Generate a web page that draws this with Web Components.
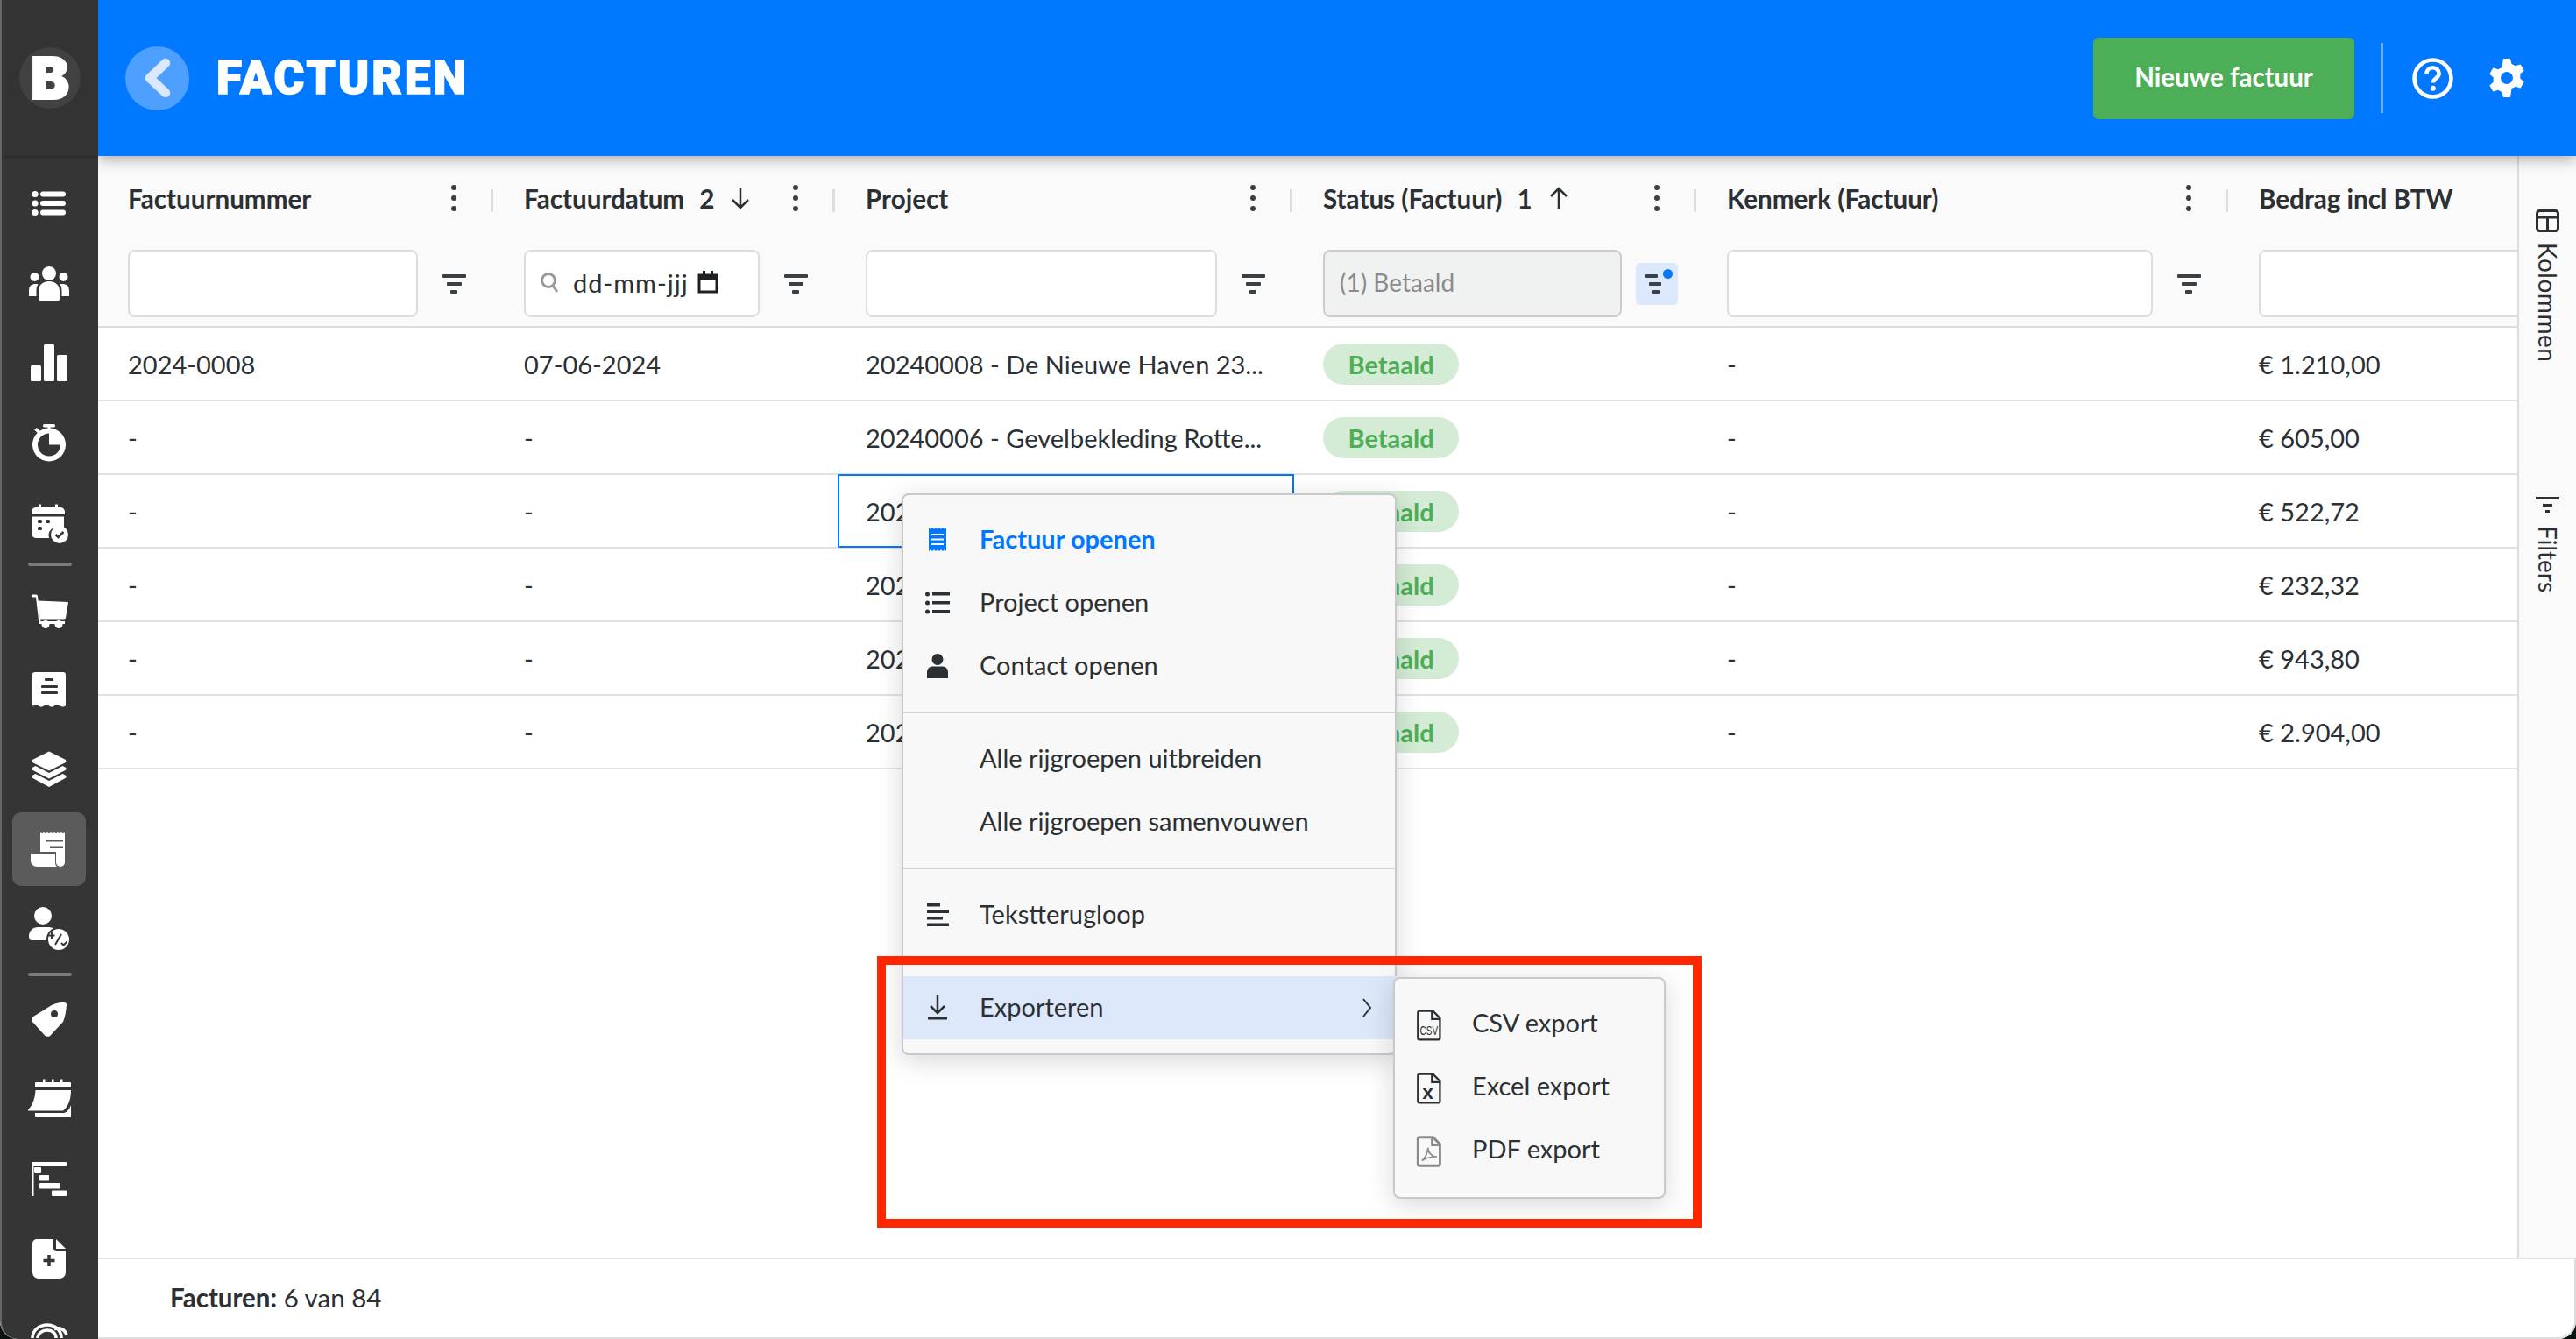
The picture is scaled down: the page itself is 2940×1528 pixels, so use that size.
<!DOCTYPE html>
<html lang="nl">
<head>
<meta charset="utf-8">
<title>Facturen</title>
<style>
  html, body { margin: 0; height: 100%; background: #0c1412; }
</style>
</head>
<body>

<fa-app>
  <fa-sidebar slot="sidebar">
    <fa-nav-item icon="list"></fa-nav-item>
    <fa-nav-item icon="people"></fa-nav-item>
    <fa-nav-item icon="bars"></fa-nav-item>
    <fa-nav-item icon="timer"></fa-nav-item>
    <fa-nav-item icon="calcheck"></fa-nav-item>
    <fa-nav-divider></fa-nav-divider>
    <fa-nav-item icon="cart"></fa-nav-item>
    <fa-nav-item icon="receipt"></fa-nav-item>
    <fa-nav-item icon="layers"></fa-nav-item>
    <fa-nav-item icon="invoice" active></fa-nav-item>
    <fa-nav-item icon="userbadge"></fa-nav-item>
    <fa-nav-divider style="margin-top:5px;margin-bottom:3px"></fa-nav-divider>
    <fa-nav-item icon="tag"></fa-nav-item>
    <fa-nav-item icon="calflip"></fa-nav-item>
    <fa-nav-item icon="gantt"></fa-nav-item>
    <fa-nav-item icon="fileplus"></fa-nav-item>
    <fa-nav-item icon="spiral"></fa-nav-item>
  </fa-sidebar>

  <fa-header slot="header" title-text="FACTUREN" action="Nieuwe factuur"></fa-header>

  <fa-table slot="table">
    <fa-col-head slot="head" label="Factuurnummer"></fa-col-head>
    <fa-col-head slot="head" label="Factuurdatum" sort="2" dir="down" type="date"></fa-col-head>
    <fa-col-head slot="head" label="Project"></fa-col-head>
    <fa-col-head slot="head" label="Status (Factuur)" sort="1" dir="up" value="(1) Betaald" filtered></fa-col-head>
    <fa-col-head slot="head" label="Kenmerk (Factuur)"></fa-col-head>
    <fa-col-head slot="head" label="Bedrag incl BTW" last></fa-col-head>

    <fa-row><span>2024-0008</span><span>07-06-2024</span><span>20240008 - De Nieuwe Haven 23...</span><span><fa-badge>Betaald</fa-badge></span><span>-</span><span>€ 1.210,00</span></fa-row>
    <fa-row><span>-</span><span>-</span><span>20240006 - Gevelbekleding Rotte...</span><span><fa-badge>Betaald</fa-badge></span><span>-</span><span>€ 605,00</span></fa-row>
    <fa-row><span>-</span><span>-</span><span class="focus">202</span><span><fa-badge>Betaald</fa-badge></span><span>-</span><span>€ 522,72</span></fa-row>
    <fa-row><span>-</span><span>-</span><span>202</span><span><fa-badge>Betaald</fa-badge></span><span>-</span><span>€ 232,32</span></fa-row>
    <fa-row><span>-</span><span>-</span><span>202</span><span><fa-badge>Betaald</fa-badge></span><span>-</span><span>€ 943,80</span></fa-row>
    <fa-row><span>-</span><span>-</span><span>202</span><span><fa-badge>Betaald</fa-badge></span><span>-</span><span>€ 2.904,00</span></fa-row>
  </fa-table>

  <fa-side-panel slot="panel"></fa-side-panel>

  <fa-footer slot="footer"><b>Facturen:</b>&nbsp;6 van 84</fa-footer>

  <fa-menu slot="overlay" style="left:1029px;top:563px;width:565px;height:641px">
    <fa-menu-item icon="m-receipt" accent>Factuur openen</fa-menu-item>
    <fa-menu-item icon="m-list">Project openen</fa-menu-item>
    <fa-menu-item icon="m-person">Contact openen</fa-menu-item>
    <fa-menu-sep></fa-menu-sep>
    <fa-menu-item>Alle rijgroepen uitbreiden</fa-menu-item>
    <fa-menu-item>Alle rijgroepen samenvouwen</fa-menu-item>
    <fa-menu-sep></fa-menu-sep>
    <fa-menu-item icon="m-wrap">Tekstterugloop</fa-menu-item>
    <fa-menu-sep></fa-menu-sep>
    <fa-menu-item icon="m-download" highlighted arrow>Exporteren</fa-menu-item>
  </fa-menu>

  <fa-menu slot="overlay" style="left:1590px;top:1115px;width:311px;height:253px">
    <fa-menu-item sub icon="m-csv">CSV export</fa-menu-item>
    <fa-menu-item sub icon="m-xls">Excel export</fa-menu-item>
    <fa-menu-item sub icon="m-pdf">PDF export</fa-menu-item>
  </fa-menu>

  <fa-callout slot="overlay" style="left:1001px;top:1091px;width:941px;height:310px"></fa-callout>
</fa-app>

<script>
// icons are drawn in a 48x48 box (menu ones in 28x28)
const D = "#353535";
const ICONS = {
  list: `<circle cx="8" cy="13.5" r="3.6"/><circle cx="8" cy="24" r="3.6"/><circle cx="8" cy="34.5" r="3.6"/>
    <rect x="14" y="10.5" width="29" height="6" rx="3"/><rect x="14" y="21" width="29" height="6" rx="3"/><rect x="14" y="31.5" width="29" height="6" rx="3"/>`,
  people: `<circle cx="24" cy="13" r="8"/><circle cx="7.5" cy="17" r="5"/><circle cx="40.5" cy="17" r="5"/>
    <path d="M12 43V33c0-7 5-11 12-11s12 4 12 11v10a2 2 0 0 1-2 1H14a2 2 0 0 1-2-1z"/>
    <path d="M1 39v-6c0-6 3-8 8-8 1 0 2 0 2.500.5C10 27 9.500 30 9.500 33v6z"/><path d="M47 39v-6c0-6-3-8-8-8-1 0-2 0-2.500.5C38 27 38.500 30 38.500 33v6z"/>`,
  bars: `<rect x="3" y="27" width="12" height="18" rx="1.500"/><rect x="18" y="3" width="12" height="42" rx="1.500"/><rect x="33" y="15" width="12" height="30" rx="1.500"/>`,
  timer: `<rect x="17" y="3" width="14" height="3.500" rx="1.500"/><rect x="22.500" y="5" width="3" height="5"/><path d="M7 9.500l3-2.500 4 4-2.500 2.500z"/>
    <path fill-rule="evenodd" d="M24 7.500a19 19 0 1 1 0 38 19 19 0 0 1 0-38zm0 6a13 13 0 1 0 13 13H24z"/>`,
  calcheck: `<path d="M9 7h3V3.500h3V7h16V3.500h3V7h3a5 5 0 0 1 5 5v3H4v-3a5 5 0 0 1 5-5z"/>
    <path d="M4 17.500h37V30H30a9 9 0 0 0-6 12H9a5 5 0 0 1-5-5z"/>
    <rect x="11" y="21" width="5" height="4" rx="1.500" fill="${D}"/><rect x="20" y="21" width="5" height="4" rx="1.500" fill="${D}"/><rect x="11" y="29" width="5" height="4" rx="1.500" fill="${D}"/>
    <circle cx="36" cy="38" r="10"/><path d="M31.500 38l3 3 6-6" fill="none" stroke="${D}" stroke-width="2.500"/>`,
  cart: `<path d="M4 6.500h5a2 2 0 0 1 2 1.700L14.500 37H42v3H12.500L9 9.500H4z"/><path d="M11 13.500l35 1.500-3 18a2 2 0 0 1-2 1.500H14z"/>
    <circle cx="20" cy="40.500" r="4.500"/><circle cx="35" cy="40.500" r="4.500"/>`,
  receipt: `<path d="M8 4h32a3 3 0 0 1 3 3v35c-2 2-4 2-6.500.5-2.500-1.500-4.500-1.500-6.500 0-2 1.500-4 1.500-6 0s-4-1.500-6 0-4 1.500-6 0-4-1.500-6.500 0C9 44 7 44 5 42V7a3 3 0 0 1 3-3z"/>
    <rect x="19" y="11" width="10" height="3" rx="1" fill="${D}"/><rect x="15" y="19" width="19" height="3" rx="1" fill="${D}"/><rect x="15" y="26" width="19" height="3" rx="1" fill="${D}"/>`,
  layers: `<path d="M24 3.500l18 9c2 1 2 3 0 4l-18 9-18-9c-2-1-2-3 0-4z"/>
    <path d="M8.500 20l15.500 8 15.500-8 3 1.500c1.500 1 1.500 2.500 0 3.500L24 34.500 5.500 25c-1.500-1-1.500-2.500 0-3.500z"/>
    <path d="M8.500 29l15.500 8 15.500-8 3 1.500c1.500 1 1.500 2.500 0 3.500L24 44 5.500 34c-1.500-1-1.500-2.500 0-3.500z"/>`,
  invoice: `<path d="M14 5l2 1.300 2-1.300 2 1.300 2-1.300 2 1.300 2-1.300 2 1.300 2-1.300 2 1.300 2-1.300 2 1.300 2-1.300 2 1.300 2-1.300h0v34a5 5 0 0 1-10 0v-12H14z" fill="#fff"/>
    <path d="M3 29h28v10c0 2 .6 4 2 5H10a7 7 0 0 1-7-7z"/>
    <rect x="20" y="13" width="20" height="2.500" fill="#5a5a5a"/><rect x="25" y="20.500" width="15" height="2.500" fill="#5a5a5a"/>`,
  userbadge: `<circle cx="17" cy="9" r="10"/><path d="M1 32c0-6 5-10 10-10h12c5 0 8 2 9 6l-6 9H4c-2 0-3-2-3-5z"/>
    <circle cx="35" cy="36" r="13" stroke="${D}" stroke-width="2"/>
    <path d="M27 28v7M23.500 31.500h7M31 42l7-12M38 40l2.500 2.500 4-4" fill="none" stroke="${D}" stroke-width="2"/>`,
  tag: `<path fill-rule="evenodd" d="M6 21L27 8c5-2.500 10-3 14.500-3 1.500 0 2.500 1 2.500 2.500-.5 6-1.500 14-4 19.500L27 41c-2 3-5 3.500-7.500 2L6 28c-2.500-2-2.500-5 0-7zm24-7a4 4 0 1 0 0 8 4 4 0 0 0 0-8z"/>`,
  calflip: `<rect x="17" y="1.500" width="2.500" height="5"/><rect x="27" y="1.500" width="2.500" height="5"/><rect x="37" y="1.500" width="2.500" height="5"/>
    <rect x="8" y="5" width="41" height="6" rx="1"/><path d="M8.500 14H49c0 10-3 19-9 23.500H1c-1 0-1.500-.5-1-1 5-5 8-13 8.500-22.500z"/>
    <path d="M8 40h33c4-1 6-4 8-9v14H9a1 1 0 0 1-1-1z"/>`,
  gantt: `<rect x="4" y="5" width="2.500" height="39"/><rect x="4" y="5" width="40" height="5" rx="1"/><rect x="7" y="11" width="8" height="6" rx="1"/>
    <rect x="13" y="20" width="11" height="6.500" rx="1"/><rect x="13" y="29" width="24" height="6.500" rx="1"/><rect x="27" y="37.500" width="17" height="6.500" rx="1"/>`,
  fileplus: `<path d="M10 2h19v10a4 4 0 0 0 4 4h10v24a7 7 0 0 1-7 7H12a7 7 0 0 1-7-7V7a5 5 0 0 1 5-5z"/><path d="M32 2l11 11H32z"/>
    <path d="M24 20v13M17.500 26.500h13" stroke="${D}" stroke-width="3.500" fill="none"/>`,
  spiral: `<g fill="none" stroke="#fff" stroke-width="3.500"><path d="M5 24c0-9 8-15 17-15s16 6 16 15"/><path d="M11 24c0-5 5-9 11-9s10 4 10 9"/><path d="M30 14c6-3 12 0 14 6"/></g>`,

  "m-receipt": `<path d="M4 0l2 1.800L8 0l2 1.800L12 0l2 1.800L16 0l2 1.800L20 0l2 1.800L24 0v27l-2-1.800L20 27l-2-1.800L16 27l-2-1.800L12 27l-2-1.800L8 27l-2-1.800L4 27z"/>
    <g fill="#f8f8f8"><rect x="7" y="7" width="14" height="2"/><rect x="7" y="12.500" width="14" height="2"/><rect x="7" y="18" width="14" height="2"/></g>`,
  "m-list": `<circle cx="2.500" cy="4" r="2.500"/><circle cx="2.500" cy="14" r="2.500"/><circle cx="2.500" cy="24" r="2.500"/><rect x="8" y="2" width="20" height="3.500"/><rect x="8" y="12" width="20" height="3.500"/><rect x="8" y="22" width="20" height="3.500"/>`,
  "m-person": `<circle cx="14" cy="6.500" r="6.500"/><path d="M2 28v-7c0-4 3-6.500 6-6.500h12c3 0 6 2.500 6 6.500v7z" /><rect x="2" y="25" width="24" height="3" rx="1.500"/>`,
  "m-wrap": `<rect x="2" y="1" width="15" height="3.500"/><rect x="2" y="8.500" width="25" height="3.500"/><rect x="2" y="16" width="18" height="3.500"/><rect x="2" y="23.500" width="25" height="3.500"/>`,
  "m-download": `<path d="M14 0v19M6 12l8 8 8-8" fill="none" stroke="currentColor" stroke-width="2.500"/><rect x="3" y="24" width="22" height="3.500"/>`,
  "m-csv": `<path d="M3 1.500h14l7 7v20a1.500 1.500 0 0 1-1.500 1.500h-19A1.500 1.500 0 0 1 2 28.500V3a1.500 1.500 0 0 1 1-1.500z" fill="none" stroke="currentColor" stroke-width="2"/><path d="M16 1.500v8h8" fill="none" stroke="currentColor" stroke-width="2"/><text x="13" y="25" font-size="12.500" font-family="Liberation Sans" text-anchor="middle" textLength="18" lengthAdjust="spacingAndGlyphs">CSV</text>`,
  "m-xls": `<path d="M3 1.500h14l7 7v20a1.500 1.500 0 0 1-1.500 1.500h-19A1.500 1.500 0 0 1 2 28.500V3a1.500 1.500 0 0 1 1-1.500z" fill="none" stroke="currentColor" stroke-width="2"/><path d="M16 1.500v8h8" fill="none" stroke="currentColor" stroke-width="2"/><text x="12" y="26.500" font-size="20" font-weight="700" font-family="Liberation Sans" text-anchor="middle">x</text>`,
  "m-pdf": `<g fill="none" stroke="#8a8a8a"><path d="M3 1.500h14l7 7v20a1.500 1.500 0 0 1-1.500 1.500h-19A1.500 1.500 0 0 1 2 28.500V3a1.500 1.500 0 0 1 1-1.500z" stroke-width="2.500"/><path d="M16 1.500v8h8" stroke-width="2"/><path d="M6 25c3-2 6-8 6-13 0 5 4 9 9 9-6 0-11 1-15 4z" stroke-width="1.500"/></g>`,
};

class FaIcon extends HTMLElement {
  connectedCallback() {
    const size = this.getAttribute("size") || 48;
    const box = this.getAttribute("box") || 48;
    const root = this.shadowRoot || this.attachShadow({ mode: "open" });
    root.innerHTML = `<style>:host{display:inline-flex;line-height:0}svg{overflow:visible;fill:currentColor}</style>
      <svg width="${size}" height="${size}" viewBox="0 0 ${box} ${box}">${ICONS[this.getAttribute("name")] || ""}</svg>`;
  }
}

const appTemplate = document.createElement("template");
appTemplate.innerHTML = `
<style>
  :host {
    display: grid;
    grid-template-columns: 112px 1fr 67px;
    grid-template-rows: 178px 1fr 93px;
    width: 2940px;
    height: 1528px;
    position: relative;
    overflow: hidden;
    border-radius: 0 0 20px 20px;
    background: #fff;
    font-family: Lato, "Noto Sans", sans-serif;
    color: #2b3034;
    font-size: 29px;
  }
  .sidebar { grid-row: 1 / 4; grid-column: 1; display: flex; min-height: 0; }
  .header { grid-row: 1; grid-column: 2 / 4; display: flex; position: relative; z-index: 2; }
  .table { grid-row: 2; grid-column: 2; display: flex; min-width: 0; min-height: 0; }
  .panel { grid-row: 2; grid-column: 3; display: flex; min-height: 0; }
  .footer { grid-row: 3; grid-column: 2 / 4; display: flex; }
</style>
<div class="sidebar"><slot name="sidebar"></slot></div>
<div class="header"><slot name="header"></slot></div>
<div class="table"><slot name="table"></slot></div>
<div class="panel"><slot name="panel"></slot></div>
<div class="footer"><slot name="footer"></slot></div>
<slot name="overlay"></slot>
`;
class FaApp extends HTMLElement {
  constructor() {
    super();
    this.attachShadow({ mode: "open" });
    this.shadowRoot.appendChild(appTemplate.content.cloneNode(true));
  }
}

class FaSidebar extends HTMLElement {
  constructor() {
    super();
    this.attachShadow({ mode: "open" }).innerHTML = `
<style>
  :host { display: flex; flex-direction: column; flex: 1; background: #353535; border-left: 2px solid #666; border-radius: 0 0 0 20px; overflow: hidden; position: relative; z-index: 3; }
  .logo { height: 178px; flex: none; background: #333; box-shadow: 0 1px 3px rgba(0,0,0,.3); display: flex; align-items: center; justify-content: center; margin-bottom: 8px; }
  .logo span { width: 70px; height: 70px; border-radius: 50%; background: #414141; display: flex; align-items: center; justify-content: center;
    color: #fff; font: 900 66px/1 Inter, Roboto, sans-serif; -webkit-text-stroke: 2px #fff; }
</style>
<div class="logo"><span>B</span></div>
<slot></slot>`;
  }
}

class FaNavItem extends HTMLElement {
  constructor() {
    super();
    this.attachShadow({ mode: "open" }).innerHTML = `
<style>
  :host { display: flex; flex: none; height: 91px; align-items: center; justify-content: center; margin-left: -2px; color: #fff; }
  :host([active]) .box { background: #5b5b5b; }
  .box { width: 84px; height: 84px; border-radius: 10px; display: flex; align-items: center; justify-content: center; }
</style>
<div class="box"><fa-icon name="${this.getAttribute("icon")}"></fa-icon></div>`;
  }
}

class FaNavDivider extends HTMLElement {
  constructor() {
    super();
    this.attachShadow({ mode: "open" }).innerHTML = `
<style>
  :host { display: block; flex: none; height: 4px; margin: 1px 30px 4px 30px; background: #7b7b7b; border-radius: 2px; }
</style>`;
  }
}

class FaHeader extends HTMLElement {
  constructor() {
    super();
    this.attachShadow({ mode: "open" }).innerHTML = `
<style>
  :host { display: flex; flex: 1; align-items: center; background: #0078ff; box-shadow: 0 3px 16px rgba(0,0,0,.35); padding: 0 56px 0 31px; color: #fff; }
  .back { width: 73px; height: 73px; border-radius: 50%; background: rgba(255,255,255,.3); display: flex; align-items: center; justify-content: center; flex: none; }
  h1 { margin: 0 0 0 31px; font: 900 53px/1 Roboto, sans-serif; letter-spacing: 3px; -webkit-text-stroke: 1.500px #fff; flex: 1; }
  .action { width: 298px; height: 93px; border: 0; background: #4caf57; color: #fff; border-radius: 6px; font: 700 29.5px Lato, sans-serif; padding: 0 0 3px; }
  .rule { width: 3px; height: 80px; margin: 0 33px 0 30px; background: rgba(255,255,255,.4); }
  .tools { display: flex; gap: 38px; align-items: center; }
  svg { display: block; }
</style>
<div class="back"><svg width="40" height="52" viewBox="0 0 40 52"><path d="M29 9L11 26l18 17" fill="none" stroke="#dbe8ff" stroke-width="10.500" stroke-linejoin="round" stroke-linecap="round"/></svg></div>
<h1>${this.getAttribute("title-text")}</h1>
<button class="action">${this.getAttribute("action")}</button>
<div class="rule"></div>
<div class="tools">
  <svg width="47" height="47" viewBox="0 0 46 46"><circle cx="23" cy="23" r="20.500" fill="none" stroke="#fff" stroke-width="4.500"/>
    <path d="M16 18c0-4 3-7 7-7s7 3 7 6.500c0 5-6.500 5-6.500 10.500" fill="none" stroke="#fff" stroke-width="4.500"/><circle cx="23.300" cy="34" r="3" fill="#fff"/></svg>
  <svg width="46" height="46" viewBox="0 0 46 46"><path fill="#fff" fill-rule="evenodd" d="M19 1h8l1.500 6c1.500.5 3 1.200 4.200 2.200l6-1.800 4 7-4.500 4.200c.3 1.600.3 3.200 0 4.800l4.500 4.200-4 7-6-1.800c-1.200 1-2.700 1.700-4.200 2.200L27 45h-8l-1.500-6c-1.500-.5-3-1.200-4.200-2.200l-6 1.800-4-7 4.500-4.200c-.3-1.600-.3-3.200 0-4.800L3.300 18.400l4-7 6 1.800c1.200-1 2.700-1.700 4.200-2.200zM23 16a7 7 0 1 0 0 14 7 7 0 0 0 0-14z"/></svg>
</div>`;
  }
}

class FaTable extends HTMLElement {
  constructor() {
    super();
    this.attachShadow({ mode: "open" }).innerHTML = `
<style>
  :host { display: block; flex: 1; min-width: 0; overflow: hidden; background: #fff; --cols: 451px 390px 522px 461px 607px 331px; }
  .head { display: grid; grid-template-columns: var(--cols); height: 194px; background: #fafafa; border-bottom: 2px solid #ddd; }
</style>
<div class="head"><slot name="head"></slot></div>
<slot></slot>`;
  }
}

class FaColHead extends HTMLElement {
  constructor() {
    super();
    const a = (n) => this.getAttribute(n);
    const sort = a("sort")
      ? `<span class="num">${a("sort")}</span><svg class="arrow" width="22" height="26" viewBox="0 0 22 26"><path d="${a("dir") === "down" ? "M11 1v23M2 15l9 9 9-9" : "M11 25V2M2 11l9-9 9 9"}" fill="none" stroke="#2b3034" stroke-width="2.500"/></svg>`
      : "";
    const input = a("type") === "date"
      ? `<svg width="22" height="24" viewBox="0 0 22 24"><circle cx="10" cy="10" r="7.500" fill="none" stroke="#999" stroke-width="3"/><path d="M15 16l5 7" stroke="#999" stroke-width="3"/></svg>
         <span class="date">dd-mm-jjj</span>
         <svg class="cal" width="24" height="26" viewBox="0 0 24 26"><path d="M2 5h20v19H2z" fill="none" stroke="#1d2124" stroke-width="3"/><path d="M1 4h22v6H1zM6 0h3v5H6zM15 0h3v5h-3z" fill="#1d2124"/></svg>`
      : (a("value") || "");
    this.attachShadow({ mode: "open" }).innerHTML = `
<style>
  :host { display: flex; flex-direction: column; min-width: 0; padding: 23px 25px 0 35px; position: relative; overflow: hidden; }
  :host(:first-child) { padding-left: 34px; }
  .title { height: 50px; display: flex; align-items: center; font-weight: 700; font-size: 29.6px; white-space: nowrap; }
  .num { margin-left: 17px; }
  .arrow { margin-left: 19px; }
  .kebab { margin-left: auto; width: 40px; display: flex; flex-direction: column; align-items: center; gap: 6px; }
  .kebab i { width: 6px; height: 6px; border-radius: 50%; background: #3b4044; }
  :host::after { content: ""; position: absolute; right: 0; top: 38px; height: 26px; width: 3px; background: #ddd; }
  :host([last])::after { display: none; }
  .filters { margin-top: 34px; display: flex; gap: 21px; align-items: center; }
  .input { flex: 1; min-width: 0; height: 77px; box-sizing: border-box; border: 2px solid #ddd; border-radius: 8px; background: #fff; display: flex; align-items: center; gap: 10px; padding: 0 16px 3px; color: #2b3034; white-space: nowrap; }
  :host([last]) .input { flex: none; width: 420px; }
  :host([filtered]) .input { background: #f0f2f1; border-color: #ccc; color: #8a8a8a; font-size: 28px; padding-left: 17px; }
  .date { margin-left: 6px; letter-spacing: 1px; }
  .funnel { flex: none; width: 40px; height: 48px; display: flex; flex-direction: column; align-items: center; justify-content: center; gap: 5px; position: relative; border-radius: 5px; }
  .funnel i { height: 4px; background: #3b4044; border-radius: 1px; }
  .funnel i:nth-child(1) { width: 27px; } .funnel i:nth-child(2) { width: 17px; } .funnel i:nth-child(3) { width: 8px; }
  :host([filtered]) .funnel { background: #dce8fc; width: 48px; margin: 0 -4px 0 -5px; }
  :host([filtered]) .funnel i:nth-child(1) { width: 14px; margin-left: -13px; }
  :host([filtered]) .funnel i:nth-child(2) { width: 14px; margin-left: -4px; }
  :host([filtered]) .funnel i:nth-child(3) { width: 8px; margin-left: -3px; }
  .dot { position: absolute; top: 7px; right: 6px; width: 11px; height: 11px; border-radius: 50%; background: #0078ff; }
</style>
<div class="title">${a("label")}${sort}${a("last") === null ? `<span class="kebab"><i></i><i></i><i></i></span>` : ""}</div>
<div class="filters">
  <div class="input">${input}</div>
  ${a("last") === null ? `<div class="funnel"><i></i><i></i><i></i>${a("filtered") !== null ? `<span class="dot"></span>` : ""}</div>` : ""}
</div>`;
  }
}

class FaRow extends HTMLElement {
  constructor() {
    super();
    this.attachShadow({ mode: "open" }).innerHTML = `
<style>
  :host { display: grid; grid-template-columns: var(--cols); height: 84px; box-sizing: border-box; border-bottom: 2px solid #e2e2e2; }
  ::slotted(span) { display: flex; align-items: center; padding-left: 35px; white-space: nowrap; min-width: 0; position: relative; }
  ::slotted(span:first-child) { padding-left: 34px; }
  ::slotted(.focus)::after { content: ""; position: absolute; left: 3px; right: -2px; top: -1px; bottom: -1px; border: 2px solid #0078ff; }
</style>
<slot></slot>`;
  }
}

class FaBadge extends HTMLElement {
  constructor() {
    super();
    this.attachShadow({ mode: "open" }).innerHTML = `
<style>
  :host { display: inline-flex; align-items: center; height: 47px; padding: 0 28.500px; border-radius: 24px; background: #d4ecd6; color: #4caf57; font-weight: 700; }
</style>
<slot></slot>`;
  }
}

class FaSidePanel extends HTMLElement {
  constructor() {
    super();
    this.attachShadow({ mode: "open" }).innerHTML = `
<style>
  :host { display: flex; flex-direction: column; flex: 1; align-items: center; background: #fafafa; border-left: 2px solid #ddd; padding: 61px 0 0 0; box-sizing: border-box; color: #2b3034; }
  .tab { display: flex; flex-direction: row; align-items: center; gap: 12px; writing-mode: vertical-rl; font-size: 28px; line-height: 30px; letter-spacing: .5px; }
  .tab + .tab { margin-top: 154px; gap: 14px; letter-spacing: 0; }
  svg { display: block; }
</style>
<div class="tab"><svg width="27" height="26" viewBox="0 0 27 26"><rect x="1.500" y="1.500" width="24" height="23" rx="3" fill="none" stroke="#2b3034" stroke-width="3"/><path d="M1 9h25M13.500 9v16" stroke="#2b3034" stroke-width="3"/></svg><span>Kolommen</span></div>
<div class="tab"><svg width="27" height="19" viewBox="0 0 27 19"><rect width="27" height="3" fill="#2b3034"/><rect x="8" y="8" width="11" height="3" fill="#2b3034"/><rect x="11" y="15" width="5" height="3" fill="#2b3034"/></svg><span>Filters</span></div>`;
  }
}

class FaFooter extends HTMLElement {
  constructor() {
    super();
    this.attachShadow({ mode: "open" }).innerHTML = `
<style>
  :host { display: flex; flex: 1; align-items: center; padding: 0 0 3px 82px; font-size: 29.5px; background: #fff; border-top: 2px solid #e2e2e2; border-bottom: 2px solid #ddd; border-right: 2px solid #ddd; border-radius: 0 0 20px 0; box-sizing: border-box; }
</style>
<slot></slot>`;
  }
}

class FaMenu extends HTMLElement {
  constructor() {
    super();
    this.attachShadow({ mode: "open" }).innerHTML = `
<style>
  :host { position: absolute; display: flex; flex-direction: column; box-sizing: border-box; padding: 15px 0; background: #f8f8f8; border: 2px solid #c9c9c9; border-radius: 8px; box-shadow: 0 6px 30px rgba(0,0,0,.16); z-index: 5; }
</style>
<slot></slot>`;
  }
}

class FaMenuItem extends HTMLElement {
  constructor() {
    super();
    const name = this.getAttribute("icon");
    const isSub = this.hasAttribute("sub");
    this.attachShadow({ mode: "open" }).innerHTML = `
<style>
  :host { display: flex; flex: none; align-items: center; height: 72px; padding-left: ${isSub ? 26 : 25}px; color: #2b3034; white-space: nowrap; }
  :host([accent]) { color: #0078ff; font-weight: 700; }
  :host([highlighted]) { background: #dce7f9; margin-right: -2px; }
  .icon { width: 28px; height: 32px; flex: none; display: flex; align-items: center; justify-content: center; margin-right: 34px; }
  .label { padding-bottom: 3px; }
  .arrow { margin-left: auto; margin-right: 28px; }
</style>
<span class="icon">${name ? `<fa-icon name="${name}" box="28" size="${isSub ? 32 : 28}"></fa-icon>` : ""}</span>
<span class="label"><slot></slot></span>
${this.hasAttribute("arrow") ? `<svg class="arrow" width="12" height="26" viewBox="0 0 12 26"><path d="M2 3l8 10-8 10" fill="none" stroke="#2b3034" stroke-width="2"/></svg>` : ""}`;
  }
}

class FaMenuSep extends HTMLElement {
  constructor() {
    super();
    this.attachShadow({ mode: "open" }).innerHTML = `
<style>
  :host { display: block; flex: none; height: 2px; margin: 16px 0; background: #d4d4d4; }
</style>`;
  }
}

class FaCallout extends HTMLElement {
  constructor() {
    super();
    this.attachShadow({ mode: "open" }).innerHTML = `
<style>
  :host { position: absolute; box-sizing: border-box; border: 10px solid #ff2600; z-index: 6; pointer-events: none; }
</style>`;
  }
}

customElements.define("fa-icon", FaIcon);
customElements.define("fa-app", FaApp);
customElements.define("fa-sidebar", FaSidebar);
customElements.define("fa-nav-item", FaNavItem);
customElements.define("fa-nav-divider", FaNavDivider);
customElements.define("fa-header", FaHeader);
customElements.define("fa-table", FaTable);
customElements.define("fa-col-head", FaColHead);
customElements.define("fa-row", FaRow);
customElements.define("fa-badge", FaBadge);
customElements.define("fa-side-panel", FaSidePanel);
customElements.define("fa-footer", FaFooter);
customElements.define("fa-menu", FaMenu);
customElements.define("fa-menu-item", FaMenuItem);
customElements.define("fa-menu-sep", FaMenuSep);
customElements.define("fa-callout", FaCallout);
</script>
</body>
</html>
